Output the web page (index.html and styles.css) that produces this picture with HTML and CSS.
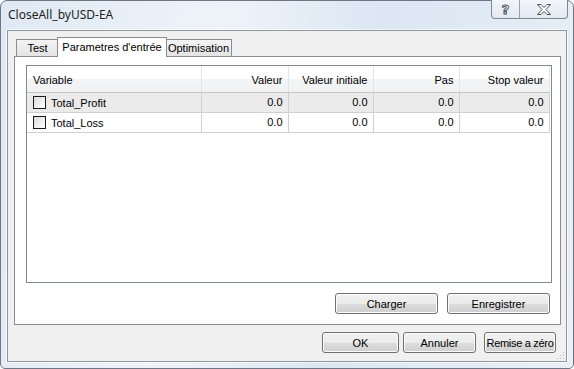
FILE: index.html
```html
<!DOCTYPE html>
<html lang="fr">
<head>
  <meta charset="UTF-8">
  <title>CloseAll_byUSD-EA</title>
  <link rel="stylesheet" href="styles.css">
</head>
<body>
  <div class="window">
    <div class="titlebar">
      <span class="caption">CloseAll_byUSD-EA</span>
      <div class="caption-btns">
        <span class="cbtn help">?</span>
        <span class="cbtn close">
          <svg width="14" height="11" viewBox="0 0 14 11"><path d="M0.5 0.5h3.5l3 3 3-3h3.5l-4.5 5 4.5 5h-3.5l-3-3-3 3h-3.5l4.5-5z" fill="#fff" stroke="#4b525b" stroke-width="1"/></svg>
        </span>
      </div>
    </div>

    <div class="client">
      <div class="tabs">
        <span class="tab t-test">Test</span>
        <span class="tab active">Parametres d'entrée</span>
        <span class="tab t-opt">Optimisation</span>
      </div>

      <div class="panel">
        <div class="list">
          <table>
            <colgroup>
              <col class="c-var"><col class="c-val"><col class="c-ini"><col class="c-pas"><col class="c-stop">
            </colgroup>
            <thead>
              <tr>
                <th class="left">Variable</th>
                <th>Valeur</th>
                <th>Valeur initiale</th>
                <th>Pas</th>
                <th>Stop valeur</th>
              </tr>
            </thead>
            <tbody>
              <tr class="sel">
                <td class="left"><span class="check"></span>Total_Profit</td>
                <td>0.0</td><td>0.0</td><td>0.0</td><td>0.0</td>
              </tr>
              <tr>
                <td class="left"><span class="check"></span>Total_Loss</td>
                <td>0.0</td><td>0.0</td><td>0.0</td><td>0.0</td>
              </tr>
            </tbody>
          </table>
        </div>
        <div class="panel-btns">
          <button class="btn w103">Charger</button>
          <button class="btn w103">Enregistrer</button>
        </div>
      </div>

      <div class="dlg-btns">
        <button class="btn ok">OK</button>
        <button class="btn cancel">Annuler</button>
        <button class="btn reset">Remise a zéro</button>
      </div>

      <svg class="grip" width="9" height="9" viewBox="0 0 9 9">
        <rect x="7" y="1" width="1" height="1" fill="#b6bcc4"/>
        <rect x="4" y="4" width="1" height="1" fill="#b6bcc4"/><rect x="7" y="4" width="1" height="1" fill="#b6bcc4"/>
        <rect x="1" y="7" width="1" height="1" fill="#b6bcc4"/><rect x="4" y="7" width="1" height="1" fill="#b6bcc4"/><rect x="7" y="7" width="1" height="1" fill="#b6bcc4"/>
      </svg>
    </div>
  </div>
</body>
</html>
```

FILE: styles.css
```css
body { margin: 0; font-family: 'Liberation Sans', Arial, sans-serif; font-size: 11px; color: #000; background: #fff; }
.window { width: 574px; height: 369px; box-sizing: border-box; border: 1px solid #6d7884; border-radius: 7px 7px 5px 5px; background: linear-gradient(100deg, #dfe9f4 0%, #eef3f9 35%, #dce7f3 60%, #e8eff7 100%); display: flex; flex-direction: column; }
.titlebar { height: 29px; flex: none; display: flex; align-items: flex-start; padding-left: 7px; }
.caption { font-family: 'Noto Sans', 'Open Sans', sans-serif; font-size: 12px; color: #1e1e1e; line-height: 28px; }
.caption-btns { margin-left: auto; margin-right: 5px; margin-top: -1px; display: flex; height: 18px; border: 1px solid #7f8892; border-top: none; border-radius: 0 0 4px 4px; background: linear-gradient(#f3f6fa, #e2e9f2); }
.cbtn { display: flex; align-items: center; justify-content: center; }
.cbtn.help { width: 27px; border-right: 1px solid #9aa2ab; font-family: 'DejaVu Sans', sans-serif; font-size: 13px; font-weight: bold; color: #fff; -webkit-text-stroke: 1px #4b525b; }
.cbtn.close { width: 47px; }

.client { position: relative; flex: 1; margin: 0 6px 6px; border: 1px solid #8e959d; box-shadow: 0 0 0 1px rgba(255,255,255,0.7); background: #f0f0f0; display: flex; flex-direction: column; }

.tabs { display: flex; align-items: flex-end; margin: 6px 0 0 8px; height: 19px; position: relative; z-index: 1; }
.tab { box-sizing: border-box; height: 17px; line-height: 16px; border: 1px solid #898c95; border-bottom: none; padding: 0; text-align: center; white-space: nowrap; background: linear-gradient(#f3f3f3, #e4e4e4); }
.t-test { width: 43px; }
.tab.active { height: 20px; line-height: 18px; width: 110px; background: #fff; margin: 0 0 -1px -2px; position: relative; }
.t-opt { width: 67px; margin-left: -2px; }

.panel { margin: 0 5px 0 6px; height: 267px; border: 1px solid #898c95; background: #fff; display: flex; flex-direction: column; }
.list { margin: 8px 8px 0 11px; height: 216px; border: 1px solid #828790; background: #fff; }
.list table { border-collapse: collapse; table-layout: fixed; width: 522px; }
.c-var { width: 174px; }
.c-val { width: 87px; }
.c-ini { width: 85px; }
.c-pas { width: 86px; }
.c-stop { width: 90px; }
.list th { height: 26px; box-sizing: border-box; padding: 3px 5px 0; font-weight: normal; text-align: right; background: linear-gradient(#ffffff 0%, #ffffff 50%, #f3f4f6 51%, #f1f2f4 100%); border-right: 1px solid #e3e5e8; border-bottom: 1px solid #c4c4c4; white-space: nowrap; }
.list td { height: 19px; padding: 0 5px; text-align: right; border-right: 1px solid #d0d0d0; border-bottom: 1px solid #d0d0d0; white-space: nowrap; }
.list .left { text-align: left; padding-left: 6px; }
.list tr.sel td { background: #ebebeb; }
.check { display: inline-block; width: 11px; height: 11px; border: 1px solid #1c1c1c; background: linear-gradient(135deg, #dcdcdc, #ffffff); vertical-align: -2px; margin-right: 5px; }

.panel-btns { display: flex; justify-content: flex-end; gap: 9px; margin: 10px 10px 0 0; }
.btn { height: 21px; box-sizing: border-box; padding: 0; white-space: nowrap; font-family: 'Liberation Sans', Arial, sans-serif; font-size: 11px; color: #000; border: 1px solid #707070; border-radius: 3px; box-shadow: inset 0 0 0 1px #fcfcfc; background: linear-gradient(#f2f2f2 0%, #ebebeb 50%, #dddddd 51%, #cfcfcf 100%); }
.w103 { width: 103px; }
.dlg-btns { display: flex; justify-content: flex-end; margin: 7px 10px 0 0; }
.btn.ok { width: 77px; }
.btn.cancel { width: 73px; margin-left: 4px; }
.btn.reset { width: 72px; margin-left: 8px; letter-spacing: -0.3px; }
.grip { position: absolute; right: 1px; bottom: 1px; }
```
